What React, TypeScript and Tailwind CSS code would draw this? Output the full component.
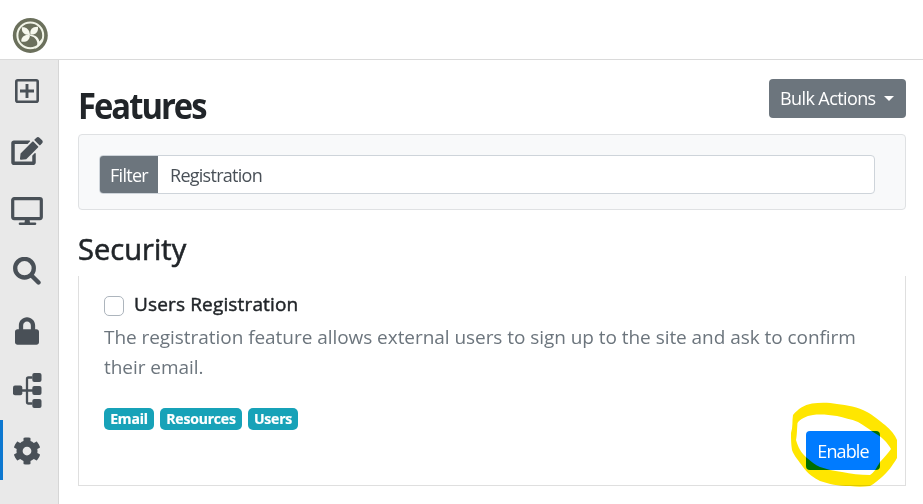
import type { ReactNode } from "react";
import { FaEdit, FaLock, FaCog } from "react-icons/fa";

function Logo() {
  return (
    <svg viewBox="0 0 36 36" className="h-9 w-9">
      <circle cx="18.300" cy="18.400" r="17.500" fill="#6b705c" />
      <circle cx="18.300" cy="18.400" r="12.900" fill="none" stroke="#f2f5e8" strokeWidth="2" />
      <g fill="#f5f7ec">
        <path d="M18 18C17.500 12.500 14.500 10 10 10.300C9 15 12.500 18.500 18 18Z" />
        <path d="M18.500 17.500C17.500 12.500 20.500 9.500 26 9.800C26.500 15.500 23.500 18 18.500 17.500Z" />
        <path d="M18 18.200C17.500 23.500 14 25.500 9.300 24.500C9 19.500 13 17 18 18.200Z" />
        <path d="M18 17.500C23 17.800 26.800 20.500 27.300 24.500L30 21.500C29.500 27 27 30 23 32C24.500 30 25.500 28 25.300 25.800C24.700 22 22 19.500 18 18.700Z" />
      </g>
    </svg>
  );
}

function PlusIcon() {
  return (
    <svg viewBox="0 0 24 24" className="h-6 w-6" fill="none" stroke="currentColor">
      <rect x="1.300" y="1.300" width="21.400" height="21.400" rx="1.500" strokeWidth="2.600" />
      <path d="M12 5V19M5 12H19" strokeWidth="2.900" />
    </svg>
  );
}

function DesktopIcon() {
  return (
    <svg viewBox="0 0 32 28" className="h-7 w-8" fill="none" stroke="currentColor">
      <rect x="1.700" y="1.600" width="28.600" height="20" rx="1.500" strokeWidth="3.200" />
      <path d="M14 22H18.500L19 26H13.500Z" fill="currentColor" stroke="none" />
      <path d="M9 26.700H24" strokeWidth="2.600" strokeLinecap="round" />
    </svg>
  );
}

function SearchIcon() {
  return (
    <svg viewBox="0 0 28 28" className="h-7 w-7" fill="none" stroke="currentColor">
      <circle cx="11.500" cy="11.200" r="9.300" strokeWidth="4.300" />
      <path d="M18.500 18.500L25.500 25.500" strokeWidth="4.400" strokeLinecap="round" />
    </svg>
  );
}

function TreeIcon() {
  return (
    <svg viewBox="0 0 30 36" className="h-9 w-[30px]" fill="currentColor">
      <rect x="1" y="13.500" width="9.300" height="9.800" rx="2" />
      <rect x="20.300" y="1" width="9.200" height="9" rx="2" />
      <rect x="20.300" y="14" width="9.200" height="9" rx="2" />
      <rect x="20.300" y="27" width="9.200" height="9" rx="2" />
      <path
        d="M20.500 5.500H16.500Q15 5.500 15 7V30Q15 31.500 16.500 31.500H20.500M10 18.500H21"
        fill="none"
        stroke="currentColor"
        strokeWidth="2.300"
      />
    </svg>
  );
}

function NavItem({ children, active = false }: { children: ReactNode; active?: boolean }) {
  return (
    <li className={`flex h-[60px] items-center border-l-[3px] pr-[7px] ${active ? "border-[#0d78d0]" : "border-transparent"}`}>
      <a href="#" className="flex w-full justify-center">
        {children}
      </a>
    </li>
  );
}

function Badge({ children }: { children: string }) {
  return (
    <span className="flex h-[22px] items-center justify-center rounded-[5px] bg-[#17a2b8] pb-px text-[14px] font-bold text-white [-webkit-text-stroke:0.200px_white]">
      {children}
    </span>
  );
}

export default function App() {
  return (
    <div className="relative flex h-[504px] w-[923px] flex-col overflow-hidden bg-white font-['Open_Sans',sans-serif] text-[#212529]">
      <header className="h-[60px] shrink-0 border-b border-[#dadada] pl-3 pt-[17px]">
        <Logo />
      </header>
      <div className="flex min-h-0 flex-1">
        <nav className="w-[59px] shrink-0 border-r border-[#d6d6d6] bg-[#e9e9e9] text-[#495057]">
          <ul>
            <NavItem><span className="mt-[2px]"><PlusIcon /></span></NavItem>
            <NavItem><FaEdit className="mt-[2px] h-7 w-8" /></NavItem>
            <NavItem><span className="mt-[2px]"><DesktopIcon /></span></NavItem>
            <NavItem><span className="mt-[2px]"><SearchIcon /></span></NavItem>
            <NavItem><FaLock className="mt-[2px] h-7 w-6" /></NavItem>
            <NavItem><TreeIcon /></NavItem>
            <NavItem active><FaCog className="mt-[2px] h-7 w-7" /></NavItem>
          </ul>
        </nav>
        <main className="flex-1 pl-[19px] pr-[17px] pt-[19px]">
          <div className="flex h-[55px] items-start justify-between">
            <h1 className="origin-left scale-x-[0.935] pt-[5px] text-[35px] font-bold leading-[44px] tracking-[-2.100px]">Features</h1>
            <button className="flex h-[39px] w-[137px] items-center rounded bg-[#6c757d] pl-[11px] text-[18px] text-white">
              <span className="w-[96px] whitespace-nowrap text-left tracking-[-0.600px]">Bulk Actions</span>
              <span className="ml-[8px] border-x-[5.500px] border-t-[5.500px] border-x-transparent border-t-white" />
            </button>
          </div>
          <div className="h-[76px] rounded border border-[#dfe1e3] bg-[#f8f9fa] pl-5 pr-[30px] pt-5">
            <div className="flex h-[39px] overflow-hidden rounded border border-[#ced4da] bg-white text-[18px]">
              <label className="-my-px -ml-px flex w-[59px] items-center justify-center bg-[#6c757d] pl-px pt-px tracking-[-0.700px] text-white">Filter</label>
              <div className="flex items-center pl-3 pt-px tracking-[-0.730px] text-[#495057]">Registration</div>
            </div>
          </div>
          <h2 className="mt-[19px] h-[47px] text-[29px] leading-[40px] tracking-[0.050px] [-webkit-text-stroke:0.600px_#212529]">Security</h2>
          <section className="flex h-[210px] flex-col border-x border-b border-[#dfdfdf] px-[25px]">
            <div className="flex h-[46px] items-center pt-[12px]">
              <span className="mt-[2px] h-5 w-5 rounded-[5px] border border-[#adb5bd]" />
              <h3 className="-mt-[2px] ml-[10px] text-[19px] tracking-[0.150px] [-webkit-text-stroke:0.450px_#212529]">Users Registration</h3>
            </div>
            <p className="whitespace-nowrap text-[19px] leading-[30px] tracking-[-0.050px] text-[#6c757d]">
              The registration feature allows external users to sign up to the site and ask to confirm
              <br />
              their email.
            </p>
            <div className="mt-[26px] flex gap-[6px] tracking-[-0.200px]">
              <div className="grid w-[50px]"><Badge>Email</Badge></div>
              <div className="grid w-[82px]"><Badge>Resources</Badge></div>
              <div className="grid w-[50px]"><Badge>Users</Badge></div>
            </div>
            <button className="mt-px h-[39px] w-[74px] shrink-0 self-end rounded bg-[#007bff] pt-px text-[18px] tracking-[-0.900px] text-white">
              Enable
            </button>
          </section>
        </main>
      </div>
      <svg viewBox="0 0 108 88" className="pointer-events-none absolute left-[790px] top-[401px] h-[88px] w-[108px] mix-blend-multiply">
        <path
          d="M3 14C8 8 14 4 22 2.500C30 1.500 39 1.500 47 3C57 4 68 6 77 11C83 14 90 20 95 24C101 29 105 34 107 39V57C103 64 97 72 92 76C88 79 84 83 80 85C73 86 67 86 60 85C48 85 39 83 30 80C24 77 18 73 13 66C9 60 4 55 2 49C1 43 1 38 1 32C3 26 2 20 3 14ZM7.500 22C10 18 16 15 23 14C31 13 39 14 47 15C54 17 61 18 68 21C73 24 78 27 83 31C91 35 98 42 101 48C98 52 94 57 90 61C87 66 84 72 80 74C70 74 61 73 52 71C43 70 37 68 30 66C25 64 21 60 17 57C11 52 8 46 6 39C7 35 7 27 7.500 22Z"
          fill="#ffe600"
          fillRule="evenodd"
        />
      </svg>
    </div>
  );
}
